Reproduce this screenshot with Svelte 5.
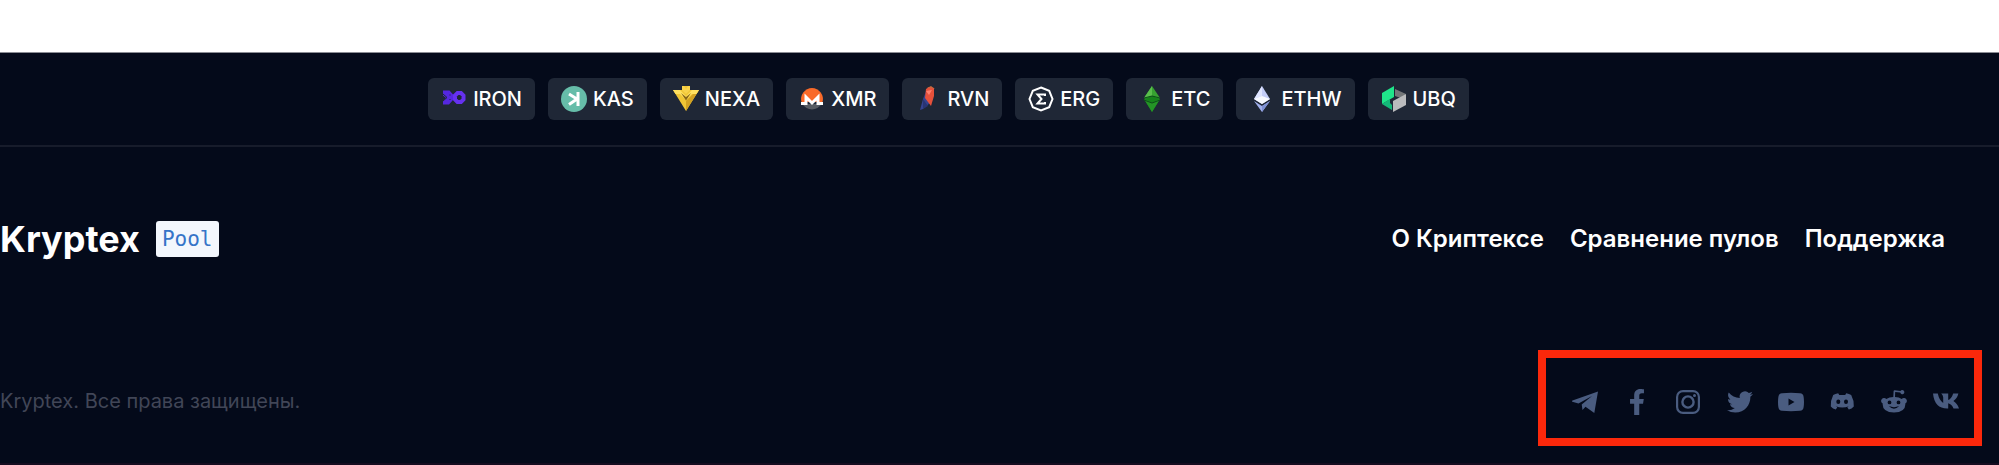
<script lang="ts">
  type Shape = { d: string; fill?: string; stroke?: string; width?: number };

  const coins: { name: string; shapes: Shape[] }[] = [
    {
      name: 'IRON',
      shapes: [
        { d: 'M2 4.500h6.500l3.500 4h3v5.500h-3l-4 4.500H2v-4l3-2.500l-3-2.500z', fill: '#5527e0' },
        { d: 'M16.500 7h3.500l2.500 2.500v4L20 16h-3.500L14 13.500v-4z', stroke: '#6631f0', width: 4 },
        { d: 'M2 8l4 3.500L2 15M9 8.500v1M9 13v1', stroke: '#1f2736', width: 1 },
      ],
    },
    {
      name: 'KAS',
      shapes: [
        { d: 'M13 0a13 13 0 1 0 0 26a13 13 0 1 0 0-26z', fill: '#66bda9' },
        { d: 'M17 6v14M8 8l8 5l-8 5.500', stroke: '#ffffff', width: 3 },
      ],
    },
    {
      name: 'NEXA',
      shapes: [
        { d: 'M0 4h9V0h8v4h9L13 25z', fill: '#f0c535' },
        { d: 'M26 4L13 25V15l7-7z', fill: '#d3a222' },
        { d: 'M0 4h7l6 6l6-6h7l-2.500 4H19l-6 6l-6-6H2.500z', fill: '#ffe060' },
        { d: 'M8 7l5 4l5-4l-5 7.500z', fill: '#8a6717' },
        { d: 'M9 0h2l2 3l2-3h2v4l-4 4l-4-4z', fill: '#f8d24c' },
      ],
    },
    {
      name: 'XMR',
      shapes: [
        { d: 'M13 2a11 11 0 0 0-10.500 14h21A11 11 0 0 0 13 2z', fill: '#f96a29' },
        { d: 'M3.500 18a11 11 0 0 0 19 0z', fill: '#575c63' },
        { d: 'M2 17.500h5V11l6 6l6-6v6.500h5', stroke: '#ffffff', width: 3 },
      ],
    },
    {
      name: 'RVN',
      shapes: [
        { d: 'M12 3L8 13L5 24l3-1l7-6z', fill: '#35438f' },
        { d: 'M11 3l3-2l5 1v8l-3 10l-6-8z', fill: '#e6513b' },
        { d: 'M11 5l6-1l-3 5z', fill: '#ff806e' },
        { d: 'M8 13l5 7l-5 3z', fill: '#293473' },
        { d: 'M12 2l4-2l4 3l-4-1z', fill: '#c7683e' },
      ],
    },
    {
      name: 'ERG',
      shapes: [
        { d: 'M13 1.500l8.200 3.300l3.300 8.200l-3.300 8.200L13 24.500l-8.200-3.300L1.500 13l3.300-8.200z', stroke: '#ffffff', width: 2 },
        { d: 'M17 10V8.500H9.500l4 4.500l-4 4.500H17V16', stroke: '#ffffff', width: 2 },
      ],
    },
    {
      name: 'ETC',
      shapes: [
        { d: 'M13 0l8 12l-8 4l-8-4z', fill: '#37a331' },
        { d: 'M13 0v10l-8 2z', fill: '#5abf4c' },
        { d: 'M13 10l8 3l-8 13l-8-13z', fill: '#16841b' },
        { d: 'M5 13l8 4l8-4l-8 13z', fill: '#249426' },
        { d: 'M5 12l8-2l8 2M5 14l8 3l8-3', stroke: '#0d4c19', width: 1 },
      ],
    },
    {
      name: 'ETHW',
      shapes: [
        { d: 'M13 0l8 13l-8 5l-8-5z', fill: '#c3cdf8' },
        { d: 'M13 0v10l-8 3z', fill: '#dfe5ff' },
        { d: 'M5 13l8-3l8 3l-8 5z', fill: '#f7f9ff' },
        { d: 'M5 15l8 5l8-5l-8 11z', fill: '#a1b0ec' },
        { d: 'M13 20l8-5l-8 11z', fill: '#7f91d5' },
      ],
    },
    {
      name: 'UBQ',
      shapes: [
        { d: 'M1 7l12-7v11l-12 7z', fill: '#1fe58a' },
        { d: 'M1 18l8-5v4l2 2v5z', fill: '#14b879' },
        { d: 'M14 3l11 5l-5 4l-6-2z', fill: '#747779' },
        { d: 'M12 15l13-7v11l-13 7z', fill: '#babbbd' },
      ],
    },
  ];

  const links = ['О Криптексе', 'Сравнение пулов', 'Поддержка'];

  const socials = [
    {
      name: 'Telegram',
      box: '0 0 26 26',
      d: 'M26 2.500L22.300 24l-8.800-6.200l-3 3.200l-.8-5.500L20 7L6.500 14.500L.3 12.700c-.5-.3-.4-.9.200-1.200z',
    },
    {
      name: 'Facebook',
      box: '-96 0 512 512',
      d: 'M279.140 288l14.220-92.660h-88.910v-60.130c0-25.350 12.420-50.060 52.240-50.060h40.420V6.260S260.430 0 225.360 0c-73.220 0-121.080 44.380-121.080 124.720v70.620H22.890V288h81.390v224h100.170V288z',
    },
    {
      name: 'Instagram',
      box: '0 0 26 26',
      d: 'M8 1h10a7 7 0 0 1 7 7v10a7 7 0 0 1-7 7H8a7 7 0 0 1-7-7V8a7 7 0 0 1 7-7zM8 3.200A4.800 4.800 0 0 0 3.200 8v10A4.800 4.800 0 0 0 8 22.800h10a4.800 4.800 0 0 0 4.800-4.800V8A4.800 4.800 0 0 0 18 3.200zM13 6.200a6.800 6.800 0 1 1 0 13.600a6.800 6.800 0 1 1 0-13.600zM13 8.600a4.400 4.400 0 1 0 0 8.800a4.400 4.400 0 1 0 0-8.800zM19.500 5a1.500 1.500 0 1 1 0 3a1.500 1.500 0 1 1 0-3z',
    },
    {
      name: 'Twitter',
      box: '0 0 24 24',
      d: 'M23.953 4.570a10 10 0 0 1-2.825.775 4.958 4.958 0 0 0 2.163-2.723c-.951.555-2.005.959-3.127 1.184a4.920 4.920 0 0 0-8.384 4.482C7.690 8.095 4.067 6.130 1.640 3.162a4.822 4.822 0 0 0-.666 2.475c0 1.710.870 3.213 2.188 4.096a4.904 4.904 0 0 1-2.228-.616v.060a4.923 4.923 0 0 0 3.946 4.827 4.996 4.996 0 0 1-2.212.085 4.936 4.936 0 0 0 4.604 3.417 9.867 9.867 0 0 1-6.102 2.105c-.390 0-.779-.023-1.170-.067a13.995 13.995 0 0 0 7.557 2.209c9.053 0 13.998-7.496 13.998-13.985 0-.210 0-.420-.015-.630A9.935 9.935 0 0 0 24 4.590z',
    },
    {
      name: 'YouTube',
      box: '0 0 26 26',
      d: 'M4 4.200q9-.8 18 0q3.200.3 3.600 3.500q.8 5.300 0 10.600q-.4 3.200-3.600 3.500q-9 .8-18 0q-3.200-.3-3.600-3.500q-.8-5.300 0-10.600q.4-3.200 3.600-3.500zM10.500 9.500v7l6-3.500z',
    },
    {
      name: 'Discord',
      box: '0 0 26 26',
      d: 'M8.200 4.200l1 1.800h6l1-1.800q3 .4 5 1.800q3 5.500 2.600 11.500q-2 2.300-5 3l-1.500-2.200l1.600-1q-6.500 2.500-13.200 0l1.600 1l-1.500 2.200q-3-.7-5-3Q.4 11.500 3.200 6q2-1.400 5-1.800zM8.300 10.500a2 2.200 0 1 0 0 4.400a2 2.200 0 1 0 0-4.400zM16 10.500a2 2.200 0 1 0 0 4.400a2 2.200 0 1 0 0-4.400z',
    },
    {
      name: 'Reddit',
      box: '0 0 26 26',
      d: 'M12.300 8l.3-6q.2-.9 1.200-.8l5.700.8a2.100 2.100 0 1 1-.3 1.600l-5-.7L14 8q4 .2 6.700 1.900a3 3 0 1 1 3.600 4.700q.6 8.400-11.300 8.900Q1.100 23 1.700 14.600a3 3 0 1 1 3.600-4.700Q8.300 8 12.300 8zM8.500 11.500a1.900 1.900 0 1 0 0 3.800a1.900 1.900 0 1 0 0-3.800zM17.500 11.500a1.900 1.900 0 1 0 0 3.800a1.900 1.900 0 1 0 0-3.800zM7.800 17q5.200 5.500 10.400 0q-5.200 2.300-10.400 0z',
    },
    {
      name: 'VK',
      box: '0 0 26 26',
      d: 'M0 4.500h4.800q1.500 7 5.400 9.500V8.500Q10 6 8.200 4.500h7V11q3.300-1.200 5-6.500h5.200q-1.200 5-5 7.500q4.100 2.500 5.600 7.500h-5.500q-1.700-4.300-5.300-5.200v5.200h-1Q1.500 19.500 0 4.500z',
    },
  ];
</script>

<footer class="page">
  <nav class="coins" aria-label="Pools">
    {#each coins as coin}
      <a class="coin" href="#{coin.name}">
        <svg class="icon" viewBox="0 0 26 26" aria-hidden="true">
          {#each coin.shapes as s}
            <path d={s.d} fill={s.fill ?? 'none'} stroke={s.stroke ?? 'none'} stroke-width={s.width ?? 0} />
          {/each}
        </svg>
        {coin.name}
      </a>
    {/each}
  </nav>

  <div class="main">
    <a class="brand" href="#home">
      <span>Kryptex</span>
      <span class="badge">Pool</span>
    </a>
    <nav class="links">
      {#each links as link}
        <a href="#about">{link}</a>
      {/each}
    </nav>
  </div>

  <div class="bottom">
    <p class="copyright">Kryptex. Все права защищены.</p>
    <nav class="socials" aria-label="Social networks">
      {#each socials as s}
        <a href="#{s.name}" aria-label={s.name}>
          <svg class="icon" viewBox={s.box} aria-hidden="true">
            <path d={s.d} fill="currentColor" fill-rule="evenodd" />
          </svg>
        </a>
      {/each}
    </nav>
  </div>
</footer>

<style>
  :global(body) {
    margin: 0;
    background: #ffffff;
  }

  .page {
    margin-top: 52px;
    border-top: 1px solid #8b8d94;
    border-bottom: 2px solid #150c20;
    background: #040a1a;
    color: #ffffff;
    font-family: Inter, 'Noto Sans', sans-serif;
  }

  a {
    color: inherit;
    text-decoration: none;
  }

  .icon {
    display: block;
    width: 26px;
    height: 26px;
    flex: none;
  }

  .coins {
    display: flex;
    justify-content: center;
    gap: 13px;
    padding: 25px 102px 25px 0;
    border-bottom: 2px solid #171c2b;
  }

  .coin {
    display: flex;
    align-items: center;
    gap: 6px;
    padding: 8px 13px;
    border-radius: 6px;
    background: #1f2736;
    font-size: 20px;
    line-height: 26px;
    font-weight: 500;
  }

  .main {
    display: flex;
    align-items: center;
    justify-content: space-between;
    padding: 72px 54px 72px 0;
  }

  .brand {
    display: flex;
    align-items: center;
    gap: 16px;
    font-size: 36px;
    line-height: 40px;
    font-weight: 700;
  }

  .badge {
    padding: 4px 6px;
    border-radius: 3px;
    background: #f3f7fd;
    color: #3574c8;
    font-family: 'DejaVu Sans Mono', monospace;
    font-size: 21px;
    line-height: 28px;
    font-weight: 400;
  }

  .links {
    display: flex;
    gap: 26px;
    font-size: 24px;
    line-height: 32px;
    font-weight: 600;
  }

  .bottom {
    display: flex;
    align-items: center;
    justify-content: space-between;
    padding: 19px 17px 17px 0;
  }

  .copyright {
    margin: 6px 0 0;
    color: #414657;
    font-size: 20px;
    line-height: 26px;
  }

  .socials {
    display: flex;
    justify-content: space-between;
    box-sizing: border-box;
    width: 444px;
    padding: 31px 15px 23px 26px;
    border: 8px solid #fb280b;
    color: #4a5c80;
  }
</style>
